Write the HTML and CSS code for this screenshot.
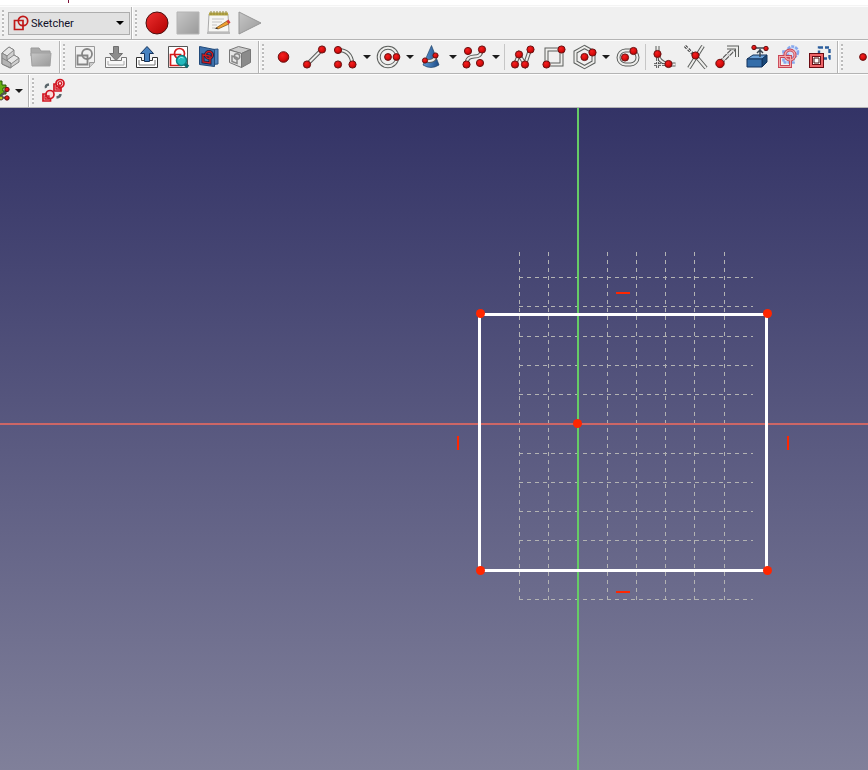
FILE: index.html
```html
<!DOCTYPE html>
<html lang="en">
<head>
<meta charset="utf-8">
<title>Sketcher</title>
<link rel="stylesheet" href="styles.css">
</head>
<body>
<svg class="defs" aria-hidden="true">
  <defs>
    <radialGradient id="ball" cx=".4" cy=".35" r=".7"><stop offset="0" stop-color="#f42020"/><stop offset=".6" stop-color="#d80c0c"/><stop offset="1" stop-color="#a00000"/></radialGradient>
    <linearGradient id="record" x1="0" y1="0" x2="1" y2="1"><stop offset="0" stop-color="#f03030"/><stop offset="1" stop-color="#b00000"/></linearGradient>
    <linearGradient id="grey" x1="0" y1="0" x2="1" y2="1"><stop offset="0" stop-color="#c6c6c6"/><stop offset="1" stop-color="#9a9a9a"/></linearGradient>
    <linearGradient id="blue" x1="0" y1="0" x2="1" y2="0"><stop offset="0" stop-color="#5f9bd6"/><stop offset="1" stop-color="#1c4a86"/></linearGradient>
  </defs>
</svg>

<div class="titlestrip"><span class="mark"></span></div>

<header class="toolbars">
  <div class="row">
    <div class="toolbar">
      <span class="grip"></span>
      <div class="workbench">
        <svg class="workbench-icon" viewBox="0 0 16 16" aria-hidden="true"><g fill="none" stroke="#c01818" stroke-width="1.7"><path d="M1.500 5.500h8.500v9h-8.500z"/><circle cx="10" cy="6" r="4.700"/></g></svg>
        <select aria-label="Workbench"><option>Sketcher</option></select>
        <svg class="workbench-arrow" viewBox="0 0 8 4" aria-hidden="true"><path d="M0 0h8L4 4z"/></svg>
      </div>
    </div>
    <div class="toolbar">
      <span class="grip"></span>
      <button class="tool" aria-label="Record macro"><svg viewBox="0 0 24 24"><circle cx="12" cy="12" r="11" fill="url(#record)" stroke="#4a1010"/></svg></button>
      <button class="tool" aria-label="Stop macro"><svg viewBox="0 0 24 24"><path d="M1 1h22v22H1z" fill="url(#grey)" stroke="#b4b4b4"/></svg></button>
      <button class="tool" aria-label="Macros"><svg viewBox="0 0 24 24"><path d="M2 3h19l1 18H1z" fill="#f6f6f4" stroke="#aaa"/><path d="M0 22h23" stroke="#bbb" stroke-width="2"/><path d="M2 1.500h19v3H2z" fill="#b5a642"/><path d="M4 0v4M7 0v4M10 0v4M13 0v4M16 0v4M19 0v4" stroke="#958a40"/><path d="M5 8h12M5 11h10M5 14h5M5 17h6" stroke="#c4c4c4"/><path d="M9 17l11-7 2 3-11 5z" fill="#f0a030" stroke="#77501a" stroke-width=".7"/><path d="M19.500 10l2-1.500 2 3-2 1.500z" fill="#d23c3c"/><path d="M7.500 18l3-1.500v1.500z" fill="#333"/></svg></button>
      <button class="tool" aria-label="Execute macro"><svg viewBox="0 0 24 24"><path d="M1 1l22 11L1 23z" fill="url(#grey)" stroke="#979797"/></svg></button>
    </div>
  </div>

  <div class="row row-parts">
    <div class="toolbar">
      <button class="tool" aria-label="Part"><svg viewBox="0 0 24 24"><g stroke="#858585" stroke-linejoin="round"><path d="M4 8l7-6 5 3v5l5 3v4l-9 6-8-4z" fill="#d0d0d0"/><path d="M4 8l7-6 5 3-7 6z" fill="#e6e6e6"/><path d="M9 15l7-5 5 3-8 6z" fill="#e6e6e6"/><path d="M4 8l5 3v4l4 4v4l-9-4z" fill="#b4b4b4"/><path d="M4 13l9 5" fill="none"/></g></svg></button>
      <button class="tool" aria-label="Group"><svg viewBox="0 0 24 24"><path d="M2 3h8l2 3h9v5H2z" fill="#aaa" stroke="#999"/><path d="M2 8h20l-1 13H3z" fill="url(#grey)" stroke="#a2a2a2"/></svg></button>
    </div>
    <div class="toolbar">
      <span class="grip"></span>
      <button class="tool" aria-label="New sketch"><svg viewBox="0 0 24 24"><path d="M2.500 1.500h19v16l-5 5h-14z" fill="#f1f1f1" stroke="#999"/><path d="M16.500 22.500v-5h5" fill="#ccc" stroke="#999"/><g fill="none" stroke="#858585" stroke-width="1.800"><path d="M4.500 10.500h10v9h-10z"/><circle cx="14" cy="9" r="5"/></g></svg></button>
      <button class="tool" aria-label="Leave sketch"><svg viewBox="0 0 24 24"><path d="M1.500 12.500h5v3h11v-3h5v10h-21z" fill="#f8f8f8" stroke="#777"/><path d="M4 16v4h16v-4" fill="none" stroke="#aaa"/><path d="M9.500 1.500h5v7h4l-6.500 7-6.500-7h4z" fill="#8c8c8c" stroke="#6f6f6f"/></svg></button>
      <button class="tool" aria-label="Load sketch"><svg viewBox="0 0 24 24"><path d="M1.500 12.500h5v3h11v-3h5v10h-21z" fill="#fff" stroke="#333"/><path d="M4 15v5h16v-5" fill="none" stroke="#777"/><path d="M9.500 16.500h5v-8h4l-6.500-7-6.500 7h4z" fill="#4882c0" stroke="#16345d"/></svg></button>
      <button class="tool" aria-label="View sketch"><svg viewBox="0 0 24 24"><path d="M2.500 1.500h19v21h-19z" fill="#fff" stroke="#555"/><g fill="none" stroke="#d41c1c" stroke-width="1.700"><path d="M4.500 9.500h10v11h-10z"/><circle cx="13.500" cy="8.500" r="5"/></g><path d="M18 18l4 4" stroke="#086b70" stroke-width="3.500"/><circle cx="15.500" cy="15.500" r="5" fill="#23b9bd" stroke="#0c7f83" stroke-width="1.500"/><path d="M12.500 14q2-3 5-1" stroke="#95eff0" fill="none"/></svg></button>
      <button class="tool" aria-label="Map sketch"><svg viewBox="0 0 24 24"><path d="M10 5l11-1v15l-11 1z" fill="#4f83bd" stroke="#2a5180"/><path d="M2.500 1.500l15 3v17l-15-2z" fill="#3d70aa" stroke="#224a7a"/><g fill="none" stroke="#17234b" stroke-width="3"><path d="M6 10l7 1v7l-7-1z"/><circle cx="12" cy="10" r="3.500"/></g><g fill="none" stroke="#d41c1c" stroke-width="1.300"><path d="M6 10l7 1v7l-7-1z"/><circle cx="12" cy="10" r="3.500"/></g></svg></button>
      <button class="tool" aria-label="Reorient sketch"><svg viewBox="0 0 24 24"><g stroke="#777"><path d="M1.500 5l9-3.500 12 3-9 4z" fill="#ccc"/><path d="M13.500 8.500l9-4v13l-9 5z" fill="#8b8b8b"/><path d="M1.500 5l12 3.500v14l-12-5z" fill="#e6e6e6"/></g><g fill="none" stroke="#888" stroke-width="1.500"><path d="M4 11l5 1.500v6l-5-2z"/><circle cx="9" cy="11.500" r="2.700"/></g></svg></button>
    </div>
    <div class="toolbar">
      <span class="grip"></span>
      <button class="tool" aria-label="Point"><svg viewBox="0 0 24 24"><circle class="ball" cx="11.500" cy="12" r="5.300"/></svg></button>
      <button class="tool" aria-label="Line"><svg viewBox="0 0 24 24"><path class="edge" d="M4 19.500l15-15"/><path class="core" d="M4 19.500l15-15"/><circle class="ball" cx="4" cy="19.500" r="3.600"/><circle class="ball" cx="19" cy="4.500" r="3.600"/></svg></button>
      <button class="tool menu" aria-label="Arc"><svg viewBox="0 0 24 24"><path class="edge" d="M4 5q13 0 14.500 14"/><path class="core" d="M4 5q13 0 14.500 14"/><circle class="ball" cx="4" cy="5" r="3.600"/><circle class="ball" cx="4" cy="19.500" r="3.600"/><circle class="ball" cx="18.500" cy="19.500" r="3.600"/></svg><i class="arrow"></i></button>
      <button class="tool menu" aria-label="Circle"><svg viewBox="0 0 24 24"><circle class="edge" cx="11" cy="12" r="9.300"/><circle class="core" cx="11" cy="12" r="9.300"/><circle class="ball" cx="11" cy="12" r="3.400"/><circle class="ball" cx="19.500" cy="12" r="3.400"/></svg><i class="arrow"></i></button>
      <button class="tool menu" aria-label="Conic"><svg viewBox="0 0 24 24"><path d="M11.500 .5L3 20q8 5 16 0z" fill="url(#blue)" stroke="#204468" stroke-width=".7"/><path class="edge" d="M5 15.500q10 2 10.500-5"/><path class="core" d="M5 15.500q10 2 10.500-5"/><circle class="ball" cx="5" cy="15.500" r="2.600"/><circle class="ball" cx="15.500" cy="10.500" r="2.600"/></svg><i class="arrow"></i></button>
      <button class="tool menu" aria-label="B-spline"><svg viewBox="0 0 24 24"><path class="edge" d="M3.500 19.500c0-14 15-2 15-15"/><path class="core" d="M3.500 19.500c0-14 15-2 15-15"/><circle class="ball" cx="5" cy="6" r="3.600"/><circle class="ball" cx="19" cy="4.500" r="3.600"/><circle class="ball" cx="3.500" cy="19.500" r="3.600"/><circle class="ball" cx="17" cy="18" r="3.600"/></svg><i class="arrow"></i></button>
      <span class="divider"></span>
      <button class="tool" aria-label="Polyline"><svg viewBox="0 0 24 24"><path class="edge" d="M4 19.500L8 9.500l6 10 5-15"/><path class="core" d="M4 19.500L8 9.500l6 10 5-15"/><circle class="ball" cx="4" cy="19.500" r="3.600"/><circle class="ball" cx="8" cy="9.500" r="3.600"/><circle class="ball" cx="14" cy="19.500" r="3.600"/><circle class="ball" cx="19.500" cy="4.500" r="3.600"/></svg></button>
      <button class="tool" aria-label="Rectangle"><svg viewBox="0 0 24 24"><path class="edge" d="M4.500 4.500h15v15h-15z"/><path class="core" d="M4.500 4.500h15v15h-15z"/><circle class="ball" cx="4.500" cy="19.500" r="3.600"/><circle class="ball" cx="19.500" cy="4.500" r="3.600"/></svg></button>
      <button class="tool menu" aria-label="Polygon"><svg viewBox="0 0 24 24"><path class="edge" d="M11.500 2l9 5v10l-9 5-9-5V7z"/><path class="core" d="M11.500 2l9 5v10l-9 5-9-5V7z"/><circle class="ball" cx="11.500" cy="12" r="3.600"/><circle class="ball" cx="19.500" cy="7.500" r="3.600"/></svg><i class="arrow"></i></button>
      <button class="tool" aria-label="Slot"><svg viewBox="0 0 24 24"><rect class="edge" x="2.500" y="5.500" width="19" height="14" rx="7"/><rect class="core" x="2.500" y="5.500" width="19" height="14" rx="7"/><circle class="ball" cx="9" cy="12.500" r="3.600"/><circle class="ball" cx="17.500" cy="6" r="3.600"/></svg></button>
      <span class="divider"></span>
      <button class="tool" aria-label="Fillet"><svg viewBox="0 0 24 24"><path class="edge" d="M5.500 1v8q1 8 11 10.500h7"/><path class="core" d="M5.500 1v8q1 8 11 10.500h7"/><path d="M5.500 13v10M2 19.500h13" stroke="#444" stroke-width="2.600" stroke-dasharray="3 1" fill="none"/><path d="M5.500 13v10M2 19.500h13" stroke="#ddd" stroke-dasharray="3 1" fill="none"/><circle class="ball" cx="5.500" cy="9" r="3.600"/><circle class="ball" cx="16.500" cy="19" r="3.600"/></svg></button>
      <button class="tool" aria-label="Trim"><svg viewBox="0 0 24 24"><path class="edge" d="M20 1L6 23M12 10l11 13"/><path class="core" d="M20 1L6 23M12 10l11 13"/><path d="M2 1l10 10" stroke="#555" stroke-width="3" stroke-dasharray="3 1.500"/><path d="M2 1l10 10" stroke="#ddd" stroke-dasharray="3 1.500"/><circle class="ball" cx="12.500" cy="10.500" r="3.600"/></svg></button>
      <button class="tool" aria-label="Extend"><svg viewBox="0 0 24 24"><path d="M6 18L20 4" stroke="#555" stroke-width="4.400" stroke-dasharray="5 1"/><path d="M6 18L20 4" stroke="#eee" stroke-width="2" stroke-dasharray="5 1"/><path class="edge" d="M13 2.500h10V12"/><path class="core" d="M13 2.500h10V12"/><circle class="ball" cx="6" cy="18.500" r="4.200"/></svg></button>
      <button class="tool" aria-label="External geometry"><svg viewBox="0 0 24 24"><g stroke="#12335d" stroke-linejoin="round"><path d="M2 14l6-4h14l-5 4z" fill="#6ba0d6"/><path d="M17 14l5-4v7l-5 5z" fill="#194777"/><path d="M2 14h15v8H2z" fill="#346da9"/></g><path d="M9 3h12M15 4v8M12 8l3-3 3 3" fill="none" stroke="#3a4652" stroke-width="1.500"/><circle class="ball" cx="9" cy="2.500" r="2.200"/><circle class="ball" cx="21" cy="3.500" r="2.200"/></svg></button>
      <button class="tool" aria-label="Carbon copy"><svg viewBox="0 0 24 24"><g fill="none" stroke="#86a8ee" stroke-width="2.600" stroke-dasharray="3 1"><path d="M7.500 6.500h10v11h-10z" fill="#d4e0f8"/><circle cx="16.500" cy="7" r="5.500" fill="#d4e0f8"/></g><g fill="none" stroke="#c84454" stroke-width="3"><path d="M3.500 11.500h11v10h-11z"/><circle cx="14" cy="10" r="5"/></g><g fill="none" stroke="#f4aaac" stroke-width="1.200"><path d="M3.500 11.500h11v10h-11z"/><circle cx="14" cy="10" r="5"/></g></svg></button>
      <button class="tool" aria-label="Toggle construction"><svg viewBox="0 0 24 24"><path d="M12 2.500h10.500v11H12z" fill="none" stroke="#2b5e9c" stroke-width="2.400" stroke-dasharray="4 2"/><path d="M4 10h11v11H4z" fill="#fff" stroke="#6b0b12" stroke-width="4"/><path d="M4 10h11v11H4z" fill="none" stroke="#ee6468" stroke-width="2"/><path d="M7 13h5v5H7z" fill="#fff" stroke="#411"/></svg></button>
    </div>
    <div class="toolbar">
      <span class="grip"></span>
      <button class="tool" aria-label="Constrain coincident"><svg viewBox="0 0 24 24"><circle class="ball" cx="12" cy="12" r="3.400"/></svg></button>
    </div>
  </div>

  <div class="row row-tools">
    <div class="toolbar">
      <button class="tool menu" aria-label="B-spline tools"><svg viewBox="0 0 24 24"><path d="M9 5h4V2h3v4h4v3h-3v3h3v3h-5v3h-4v-4H8z" fill="#66ae12" stroke="#285607"/><path d="M13 19l8-8M13 18l8 1" stroke="#555" stroke-width="2"/><circle cx="15" cy="19" r="2" fill="#c0c818" stroke="#444"/><circle class="ball" cx="21" cy="10.500" r="2.200"/><circle class="ball" cx="21" cy="19" r="2.200"/></svg><i class="arrow"></i></button>
    </div>
    <div class="toolbar">
      <span class="grip"></span>
      <button class="tool" aria-label="Switch virtual space"><svg viewBox="0 0 24 24"><g fill="#fbdada" stroke="#d01420" stroke-width="1.700"><path d="M12 5h7v7h-7z"/><circle cx="18" cy="4.500" r="4"/><path d="M1 15h7.500v7H1z"/><circle cx="8" cy="15.500" r="4"/></g><g fill="none" stroke="#d01420" stroke-width="1.300"><path d="M14 7h4v3h-4zM3 17h4v3H3z"/><circle cx="18" cy="4.500" r="1.800"/></g><path d="M4 9q-1-3 3-3.500M18.500 15q0 3-4 3.500" fill="none" stroke="#59656a" stroke-width="2.400"/></svg></button>
    </div>
  </div>
</header>

<main class="viewport">
  <svg class="scene" role="img" aria-label="Sketch with a rectangle on a grid">
    <g class="grid">
      <path d="M519.500 144v348M548.500 144v348M607.500 144v348M636.500 144v348M665.500 144v348M694.500 144v348M724.500 144v348"/>
      <path d="M519 169.500h234M519 198.500h234M519 228.500h234M519 257.500h234M519 286.500h234M519 345.500h234M519 374.500h234M519 403.500h234M519 432.500h234M519 491.500h234"/>
    </g>
    <line class="axis-x" x1="0" y1="316" x2="100%" y2="316"/>
    <line class="axis-y" x1="578" y1="0" x2="578" y2="100%"/>
    <rect class="outline" x="479.500" y="206.500" width="287" height="256"/>
    <path class="constraint" d="M616 185h14M616 484h14M458 328v14M788 328v14"/>
    <g class="vertex">
      <circle cx="480.500" cy="205.500" r="4.500"/>
      <circle cx="767.500" cy="205.500" r="4.500"/>
      <circle cx="480.500" cy="462.500" r="4.500"/>
      <circle cx="767.500" cy="462.500" r="4.500"/>
      <circle cx="577.500" cy="315.500" r="4.500"/>
    </g>
  </svg>
</main>
</body>
</html>
```

FILE: styles.css
```css
* { box-sizing: border-box; }

body {
  margin: 0;
  height: 100vh;
  display: flex;
  flex-direction: column;
  overflow: hidden;
  background: #fff;
  font-family: Roboto, "Noto Sans", sans-serif;
  font-size: 11px;
}

.defs { width: 0; height: 0; position: absolute; }

.titlestrip {
  height: 6px;
  flex: none;
  padding-left: 68px;
  border-bottom: 1px solid #f4f4f4;
}
.mark { display: block; width: 1px; height: 3px; background: #7c1038; }

.toolbars { flex: none; }

.row {
  display: flex;
  height: 34px;
  overflow: hidden;
  background: #f0f0f0;
  border-top: 1px solid #fcfcfc;
  border-bottom: 1px solid #b4b4b4;
}
.row-parts .toolbar:first-child { margin-left: -6px; }
.row-tools .toolbar:first-child { margin-left: -18px; }

.toolbar {
  flex: none;
  display: flex;
  align-items: center;
  padding-right: 3px;
  border-right: 1px solid #b4b4b4;
}
.toolbar + .toolbar { border-left: 1px solid #fff; }
.toolbar:last-child { border-right: 0; }
.toolbar:has(.workbench) { padding-right: 1px; }

.grip {
  flex: none;
  width: 8px;
  height: 26px;
  background: repeating-linear-gradient(to bottom, #bcbcbc 0 2px, #f8f8f8 2px 4px) 2px 0 / 2px 100% no-repeat;
}

.tool {
  flex: none;
  display: flex;
  align-items: center;
  width: 31px;
  height: 30px;
  padding: 0 0 0 4px;
  border: 0;
  background: none;
}
.tool svg { flex: none; width: 24px; height: 24px; overflow: visible; }
.menu { width: 43px; gap: 5px; }
.arrow {
  border: 4px solid transparent;
  border-top-color: #1c1c1c;
  border-bottom: 0;
}

.divider { width: 1px; height: 26px; margin: 0 2px; background: #c6c6c6; }

.workbench {
  position: relative;
  width: 122px;
  height: 23px;
}
.workbench select {
  appearance: none;
  width: 100%;
  height: 100%;
  padding: 0 20px 0 22px;
  border: 1px solid #adadad;
  border-radius: 0;
  background: #e1e1e1;
  color: #101028;
  font: inherit;
}
.workbench-icon { position: absolute; left: 5px; top: 3px; width: 16px; height: 16px; pointer-events: none; }
.workbench-arrow { position: absolute; right: 6px; top: 9px; width: 8px; height: 4px; pointer-events: none; }

.ball { fill: url(#ball); stroke: #6c1414; stroke-width: 1; }
.edge { fill: none; stroke: #5c5f5d; stroke-width: 4; }
.core { fill: none; stroke: #eeeeec; stroke-width: 2; }

.viewport {
  flex: 1;
  min-height: 0;
  background: linear-gradient(#333366, #80809a);
}
.scene { display: block; width: 100%; height: 100%; }
.grid { fill: none; stroke: #b3b3b3; stroke-width: 1; stroke-dasharray: 4 4; }
.axis-x { stroke: #cc6666; stroke-width: 2; }
.axis-y { stroke: #66cc66; stroke-width: 2; }
.outline { fill: none; stroke: #fff; stroke-width: 3; }
.constraint { fill: none; stroke: #ff2600; stroke-width: 2; }
.vertex { fill: #ff2600; }
```
